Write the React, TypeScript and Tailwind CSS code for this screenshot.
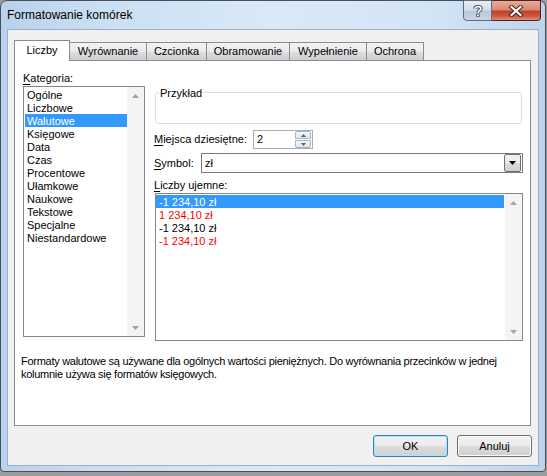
import React from 'react';

const tabs = [
    { label: 'Wyrównanie', w: 'w-[77px]' },
    { label: 'Czcionka', w: 'w-[60px]' },
    { label: 'Obramowanie', w: 'w-[83px]' },
    { label: 'Wypełnienie', w: 'w-[77px]' },
    { label: 'Ochrona', w: 'w-[57px]' },
];

const categories = [
    'Ogólne',
    'Liczbowe',
    'Walutowe',
    'Księgowe',
    'Data',
    'Czas',
    'Procentowe',
    'Ułamkowe',
    'Naukowe',
    'Tekstowe',
    'Specjalne',
    'Niestandardowe',
];

const negatives = [
    { text: '-1 234,10 zł', red: false },
    { text: '1 234,10 zł', red: true },
    { text: '-1 234,10 zł', red: false },
    { text: '-1 234,10 zł', red: true },
];

function Arrow({ down, color = '#a3a3a3' }: { down?: boolean; color?: string }) {
    return (
        <svg width="7" height="4" viewBox="0 0 7 4">
            {down ? <path d="M0 0 H7 L3.5 4 Z" fill={color} /> : <path d="M0 4 H7 L3.5 0 Z" fill={color} />}
        </svg>
    );
}

function ScrollBar() {
    return (
        <div className="w-[17px] h-full flex flex-col justify-between bg-[#f4f4f4]">
            <div className="h-[17px] flex items-center justify-center">
                <Arrow />
            </div>
            <div className="h-[17px] flex items-center justify-center">
                <Arrow down />
            </div>
        </div>
    );
}

function Underline({ ch, rest }: { ch: string; rest: string }) {
    return (
        <span>
            <span className="underline underline-offset-[2px]">{ch}</span>
            {rest}
        </span>
    );
}

export default function App() {
    return (
        <div className="w-[547px] h-[476px] overflow-hidden bg-[#9b9b9b] font-['Liberation_Sans',Arial,sans-serif] text-[11px] leading-[13px] text-black">
            <div className="w-[546px] h-[472px] flex flex-col rounded-t-[7px] rounded-b-[4px] border border-[#45505c] bg-[linear-gradient(90deg,#b9d1ea_0%,#cadff2_18%,#dae9f7_50%,#d3e4f5_80%,#bdd4ec_100%)]">
                {/* title bar */}
                <div className="h-[28px] flex items-start">
                    <div className="pl-[6px] pt-[7px] text-[12px] leading-[15px]">Formatowanie komórek</div>
                    <div className="ml-auto mr-[4px] -mt-px flex">
                        <div className="w-[29px] h-[21px] rounded-bl-[4px] border border-[#5d6b7c] bg-[linear-gradient(180deg,#e8eef5_0%,#d4dfeb_45%,#b7c8da_55%,#c9d7e6_100%)] flex items-center justify-center">
                            <svg width="10" height="12" viewBox="0 0 10 12">
                                <path d="M2 3.5 C2 1 8 1 8 3.6 C8 5.6 5 5.6 5 7.6" fill="none" stroke="#3c4650" strokeWidth="3.4" />
                                <path d="M2 3.5 C2 1 8 1 8 3.6 C8 5.6 5 5.6 5 7.6" fill="none" stroke="#ffffff" strokeWidth="1.6" />
                                <rect x="3.3" y="8.7" width="3.4" height="3" fill="#3c4650" />
                                <rect x="4.1" y="9.5" width="1.8" height="1.5" fill="#ffffff" />
                            </svg>
                        </div>
                        <div className="w-[49px] h-[21px] rounded-br-[4px] border border-l-0 border-[#4a2620] bg-[linear-gradient(180deg,#e9a99a_0%,#d98a78_45%,#c3402a_55%,#cc5a40_80%,#e0907a_100%)] flex items-center justify-center">
                            <svg width="16" height="12" viewBox="0 0 16 12">
                                <path d="M3.5 2 L12.5 10 M12.5 2 L3.5 10" stroke="#4a231c" strokeWidth="4.2" strokeLinecap="square" />
                                <path d="M3.5 2 L12.5 10 M12.5 2 L3.5 10" stroke="#ffffff" strokeWidth="2.2" strokeLinecap="square" />
                            </svg>
                        </div>
                    </div>
                </div>

                {/* client area */}
                <div className="mx-[6px] mb-[5px] flex-1 flex flex-col border border-[#9cb1c7] bg-[#f0f0f0] pl-[6px] pt-[10px]">
                    {/* tabs */}
                    <div className="h-[20px] flex items-end">
                        <div className="relative z-10 -mb-px w-[56px] h-[21px] border border-b-0 border-[#898c95] bg-white flex justify-center pt-[3px]">
                            Liczby
                        </div>
                        {tabs.map((t) => (
                            <div
                                key={t.label}
                                className={`${t.w} h-[18px] border-t border-r border-[#898c95] bg-[linear-gradient(180deg,#f2f2f2_0%,#ebebeb_50%,#dddddd_51%,#cfcfcf_100%)] flex justify-center pt-[2px]`}
                            >
                                {t.label}
                            </div>
                        ))}
                    </div>

                    {/* panel */}
                    <div className="w-[517px] h-[366px] border border-[#898c95] bg-white flex flex-col">
                        <div className="flex items-start pl-[8px]">
                            {/* left column */}
                            <div className="w-[122px] pt-[10px] flex flex-col">
                                <div className="h-[13px] leading-[15px]">
                                    <Underline ch="K" rest="ategoria:" />
                                </div>
                                <div className="mt-[2px] h-[251px] border border-[#828790] flex">
                                    <div className="flex-1 pt-px">
                                        {categories.map((c) => (
                                            <div
                                                key={c}
                                                className={`ml-px h-[13px] leading-[15px] pl-[2px] ${c === 'Walutowe' ? 'bg-[#3399ff] text-white' : ''}`}
                                            >
                                                {c}
                                            </div>
                                        ))}
                                    </div>
                                    <ScrollBar />
                                </div>
                            </div>

                            {/* right column */}
                            <div className="ml-[9px] w-[369px] pt-[31px] flex flex-col">
                                <div className="relative ml-px w-[367px] h-[32px] rounded-[3px] border border-[#d5dfe5]">
                                    <div className="absolute left-[3px] top-[-6px] bg-white px-px">Przykład</div>
                                </div>

                                <div className="mt-[6px] flex items-center">
                                    <div className="w-[99px] leading-[15px]">
                                        <Underline ch="M" rest="iejsca dziesiętne:" />
                                    </div>
                                    <div className="w-[60px] h-[19px] border border-[#abadb3] flex items-center pl-[3px] pr-px">
                                        <span className="flex-1 leading-[15px]">2</span>
                                        <div className="w-[16px] h-[17px] flex flex-col">
                                            <div className="h-[8px] mb-px rounded-t-[2px] border border-[#a8b5c5] bg-[linear-gradient(180deg,#f4f7fa_0%,#dce5ee_100%)] flex items-center justify-center">
                                                <svg width="5" height="3" viewBox="0 0 5 3">
                                                    <path d="M0 3 H5 L2.5 0 Z" fill="#4d6185" />
                                                </svg>
                                            </div>
                                            <div className="h-[8px] rounded-b-[2px] border border-[#a8b5c5] bg-[linear-gradient(180deg,#f4f7fa_0%,#dce5ee_100%)] flex items-center justify-center">
                                                <svg width="5" height="3" viewBox="0 0 5 3">
                                                    <path d="M0 0 H5 L2.5 3 Z" fill="#4d6185" />
                                                </svg>
                                            </div>
                                        </div>
                                    </div>
                                </div>

                                <div className="mt-[4px] flex items-center">
                                    <div className="w-[47px] leading-[15px]">
                                        <Underline ch="S" rest="ymbol:" />
                                    </div>
                                    <div className="w-[322px] h-[20px] border border-[#7a7a7a] flex items-center pl-[3px] pr-px">
                                        <span className="flex-1 leading-[15px]">zł</span>
                                        <div className="w-[17px] h-[18px] rounded-[2px] border border-[#707070] bg-[linear-gradient(180deg,#f2f2f2_0%,#ebebeb_50%,#dddddd_51%,#cfcfcf_100%)] flex items-center justify-center">
                                            <Arrow down color="#000000" />
                                        </div>
                                    </div>
                                </div>

                                <div className="mt-[5px] h-[13px] leading-[15px]">
                                    <Underline ch="L" rest="iczby ujemne:" />
                                </div>
                                <div className="mt-[2px] ml-px w-[368px] h-[148px] border border-[#828790] flex">
                                    <div className="flex-1 pt-px">
                                        {negatives.map((n, i) => (
                                            <div
                                                key={i}
                                                className={`mr-px h-[13px] leading-[15px] pl-[3px] ${i === 0 ? 'bg-[#3399ff] text-white' : n.red ? 'text-[#ff0000]' : ''}`}
                                            >
                                                {n.text}
                                            </div>
                                        ))}
                                    </div>
                                    <ScrollBar />
                                </div>
                            </div>
                        </div>

                        <div className="mt-[14px] pl-[6px] tracking-[-0.28px]">
                            Formaty walutowe są używane dla ogólnych wartości pieniężnych. Do wyrównania przecinków w jednej
                            <br />
                            kolumnie używa się formatów księgowych.
                        </div>
                    </div>

                    {/* buttons */}
                    <div className="mt-[9px] pr-[6px] flex justify-end gap-[9px]">
                        <div className="w-[75px] h-[22px] rounded-[3px] border border-[#3c7fb1] shadow-[inset_0_0_0_1px_#a8e4fb] bg-[linear-gradient(180deg,#f2f2f2_0%,#ebebeb_50%,#dddddd_51%,#cfcfcf_100%)] flex items-center justify-center">
                            OK
                        </div>
                        <div className="w-[75px] h-[22px] rounded-[3px] border border-[#707070] shadow-[inset_0_0_0_1px_#fcfcfc] bg-[linear-gradient(180deg,#f2f2f2_0%,#ebebeb_50%,#dddddd_51%,#cfcfcf_100%)] flex items-center justify-center">
                            Anuluj
                        </div>
                    </div>
                </div>
            </div>
        </div>
    );
}
